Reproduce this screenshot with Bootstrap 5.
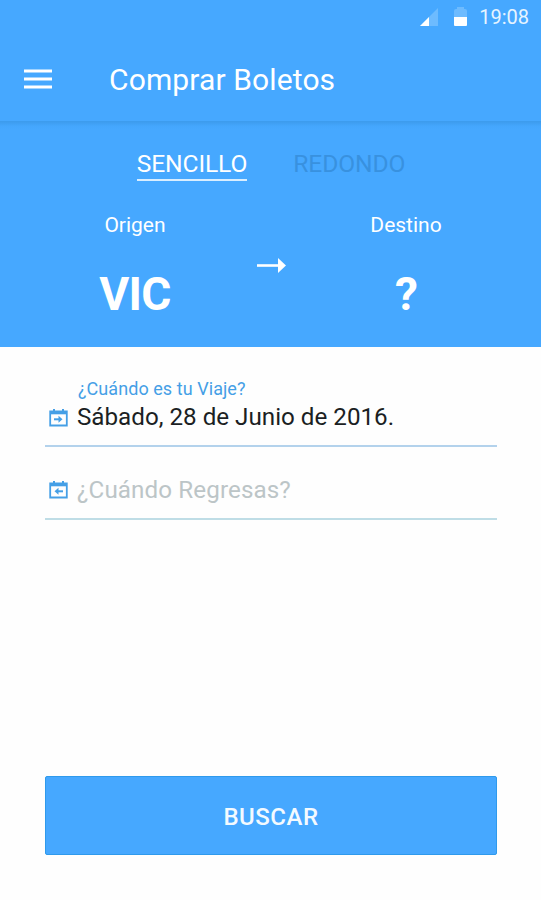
<!DOCTYPE html>
<html lang="es">
<head>
<meta charset="utf-8">
<meta name="viewport" content="width=device-width, initial-scale=1">
<title>Comprar Boletos</title>
<link href="https://cdn.jsdelivr.net/npm/bootstrap@5.3.0/dist/css/bootstrap.min.css" rel="stylesheet">
<style>
  :root { --sky: #46a8ff; }
  body { font-family: Roboto, "Liberation Sans", sans-serif; background: #fefefe; }
  svg { display: block; flex: none; }
  .screen { height: 900px; }
  .sky { background: var(--sky); }
  .status-bar { height: 34px; padding-right: 12px; font-size: 20px; line-height: 34px; }
  .clock { margin-left: 12px; color: #e6f4ff; }
  .app-bar { height: 87px; padding: 0 24px; }
  .app-title { font-size: 30px; line-height: 36px; margin: 5px 0 0 57px; letter-spacing: .12px; }
  .menu-btn { margin-top: 3px; }
  .route-panel { height: 226px; background: linear-gradient(#3c9bed 0, #3f9ff2 2px, #44a6fd 5px, var(--sky) 8px); }
  .trip-tabs { gap: 46px; padding: 28px 0 0 1px; }
  .trip-tab { font-size: 24.6px; line-height: 30px; height: 32px; border-bottom: 2px solid transparent; color: #3891df; text-decoration: none; letter-spacing: -.12px; }
  .trip-tab.active { color: #fff; border-color: #d9eeff; }
  .route { padding-top: 30px; }
  .stop { width: 160px; }
  .stop-name { font-size: 21px; line-height: 28px; }
  .stop-code { font-size: 46px; line-height: 54px; margin-top: 28px; font-weight: 700; letter-spacing: -.7px; }
  .route-arrow { margin: 47px 40px 0 42px; }
  .form-area { padding: 0 44px 45px 45px; }
  .date-field { border-bottom: 2px solid #b3d2ec; }
  .date-out { height: 100px; padding-top: 32px; }
  .date-back { height: 73px; padding-top: 27px; border-color: #bfdde6; }
  .date-label { font-size: 18px; line-height: 20px; color: #459fe6; padding-left: 33px; letter-spacing: .06px; }
  .date-value { font-size: 24.2px; line-height: 32px; color: #1b1f23; }
  .date-out .date-value { padding-top: 2px; }
  .date-value.hint { color: #bcc5c7; letter-spacing: .1px; }
  .date-icon { margin: 0 9px 0 4px; color: #459fe6; }
  .search-btn { height: 79px; font-size: 24px; font-weight: 500; letter-spacing: .5px; color: #f3faff; border: 1px solid #2f9aec; border-radius: 2px; padding: 3px 0 0; }
  .search-btn:hover { background: #369bf2; color: #fff; }
</style>
</head>
<body>
<div class="screen d-flex flex-column">
  <header class="sky text-white">
    <div class="status-bar d-flex justify-content-end align-items-center">
      <svg width="18" height="18" viewBox="0 0 18 18"><path d="M18 0v18H0z" fill="#6dbbff"/><path d="M9 9v9H0z" fill="#fff"/></svg>
      <svg class="ms-3" width="13" height="20" viewBox="0 0 13 20"><path d="M0 10V4q0-2 2-2h1V0h7v2h1q2 0 2 2v6z" fill="#6dbbff"/><path d="M0 10h13v8q0 1-1 1H1q-1 0-1-1z" fill="#fff"/></svg>
      <span class="clock">19:08</span>
    </div>
    <div class="app-bar d-flex align-items-center">
      <button class="menu-btn btn p-0 border-0" type="button" aria-label="Menú">
        <svg width="28" height="20" viewBox="0 0 28 20"><path d="M0 2h28M0 10h28M0 18h28" stroke="#fff" stroke-width="3.2"/></svg>
      </button>
      <h1 class="app-title fw-normal mb-0">Comprar Boletos</h1>
    </div>
  </header>

  <section class="route-panel text-white">
    <nav class="trip-tabs d-flex justify-content-center">
      <a class="trip-tab active" href="#">SENCILLO</a>
      <a class="trip-tab" href="#">REDONDO</a>
    </nav>
    <div class="route d-flex justify-content-center align-items-start text-center">
      <div class="stop">
        <div class="stop-name">Origen</div>
        <div class="stop-code">VIC</div>
      </div>
      <svg class="route-arrow" width="29" height="15" viewBox="0 0 29 15"><path d="M0 7.5h23" stroke="#fff" stroke-width="2.6"/><path d="M21 0l8 7.5-8 7.5z" fill="#fff"/></svg>
      <div class="stop">
        <div class="stop-name">Destino</div>
        <div class="stop-code">?</div>
      </div>
    </div>
  </section>

  <main class="form-area d-flex flex-column flex-grow-1">
    <div class="date-field date-out">
      <div class="date-label">¿Cuándo es tu Viaje?</div>
      <div class="d-flex align-items-center">
        <svg class="date-icon mt-1" width="19" height="18" viewBox="0 0 19 18" fill="none" stroke="currentColor"><path d="M1.2 2.5h16.6v14H1.2z" stroke-width="1.8"/><path d="M1 3.8h17" stroke-width="3"/><path d="M5 0v4M14 0v4" stroke-width="2"/><path d="M5 10.3h6" stroke-width="2"/><path d="M9.5 6.8l4 3.5-4 3.5z" fill="currentColor" stroke="none"/></svg>
        <div class="date-value">Sábado, 28 de Junio de 2016.</div>
      </div>
    </div>
    <div class="date-field date-back">
      <div class="d-flex align-items-center">
        <svg class="date-icon" width="19" height="18" viewBox="0 0 19 18" fill="none" stroke="currentColor"><path d="M1.2 2.5h16.6v14H1.2z" stroke-width="1.8"/><path d="M1 3.8h17" stroke-width="3"/><path d="M5 0v4M14 0v4" stroke-width="2"/><path d="M8 10.3h6" stroke-width="2"/><path d="M9.5 6.8l-4 3.5 4 3.5z" fill="currentColor" stroke="none"/></svg>
        <div class="date-value hint">¿Cuándo Regresas?</div>
      </div>
    </div>
    <button class="search-btn sky btn w-100 mt-auto" type="button">BUSCAR</button>
  </main>
</div>
<script src="https://cdn.jsdelivr.net/npm/bootstrap@5.3.0/dist/js/bootstrap.bundle.min.js"></script>
</body>
</html>
